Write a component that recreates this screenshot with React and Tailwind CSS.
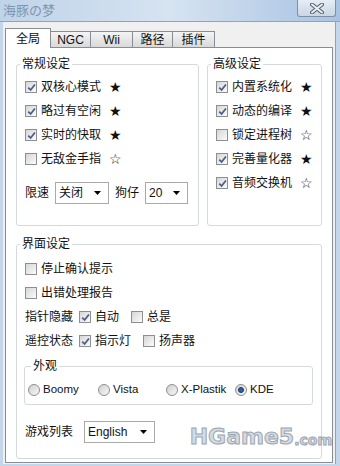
import React from "react";

// 复选框
const Check = ({ on }) => (
  <span className="w-[12px] h-[12px] shrink-0 border border-[#8e8f8f] bg-gradient-to-br from-[#d6d6d6] to-[#fbfbfb] flex items-center justify-center">
    {on && (
      <svg width="9" height="9" viewBox="0 0 10 10">
        <path d="M1.4 5.2 L4 7.8 L8.8 1.6" fill="none" stroke="#4a5d88" strokeWidth="1.9" />
      </svg>
    )}
  </span>
);

const Radio = ({ on }) => (
  <span className="w-[12px] h-[12px] shrink-0 rounded-full border border-[#8e8f8f] bg-gradient-to-br from-[#cfcfcf] to-[#f8f8f8] flex items-center justify-center">
    {on && <span className="w-[6px] h-[6px] rounded-full bg-[#2a5f9e] border border-[#173c6b]" />}
  </span>
);

const Arrow = () => (
  <svg width="7" height="4" viewBox="0 0 7 4">
    <path d="M0 0 H7 L3.5 4 Z" fill="#000" />
  </svg>
);

const Select = ({ value, w }) => (
  <div className={`h-[22px] ${w} border border-[#a9a9a9] bg-white flex items-center justify-between pl-[3px] pr-[7px]`}>
    <span className="text-[12px] leading-none">{value}</span>
    <Arrow />
  </div>
);

const CheckRow = ({ on, label, star }) => (
  <div className="h-[24px] flex items-center">
    <Check on={on} />
    <span className="ml-[4px] text-[12px] leading-none">{label}</span>
    {star !== undefined && (
      <span className="ml-[8px] text-[14px] leading-none font-['DejaVu_Sans',sans-serif]">{star ? "★" : "☆"}</span>
    )}
  </div>
);

const Legend = ({ children, cls = "-ml-[5px]" }) => (
  <legend className={`${cls} px-[2px] h-[16px] leading-[16px] text-[12px]`}>{children}</legend>
);

const tabs = [
  { label: "全局", w: "w-[46px]" },
  { label: "NGC", w: "w-[41px]" },
  { label: "Wii", w: "w-[43px]" },
  { label: "路径", w: "w-[41px]" },
  { label: "插件", w: "w-[43px]" },
];

export default function App() {
  return (
    <div className="w-[340px] h-[466px] flex flex-col bg-[#c3d6ea] text-[#111] font-['Liberation_Sans','Noto_Sans_CJK_SC',sans-serif] overflow-hidden">
      {/* 标题栏 */}
      <div className="h-[22px] shrink-0 flex items-start justify-between bg-gradient-to-r from-[#bfd3e9] via-[#d6e3f1] to-[#a8c3e2] border-b border-[#8fa3ba]">
        <span className="pl-[3px] pt-[4px] text-[13px] leading-none text-[#7e95ae]">海豚の梦</span>
        <div className="mr-[4px] w-[39px] h-[17px] rounded-b-[3px] border border-t-0 border-[#7d8fa6] bg-gradient-to-b from-[#e6edf5] to-[#c9d6e5] flex items-center justify-center">
          <svg width="14" height="11" viewBox="0 0 14 11">
            <path d="M2 1.5 L12 9.5 M12 1.5 L2 9.5" stroke="#59626d" strokeWidth="4" strokeLinecap="round" />
            <path d="M2 1.5 L12 9.5 M12 1.5 L2 9.5" stroke="#eceef1" strokeWidth="2" strokeLinecap="round" />
          </svg>
        </div>
      </div>

      {/* 客户区 */}
      <div className="flex-1 flex flex-col mx-[3px] mr-[4px] mb-[2px] bg-[#f0f0f0] border-r border-[#8aa3c1] pt-[6px] pl-[2px] pr-[2px] pb-[1px]">
        <div className="h-[19px] shrink-0 flex items-end">
          {tabs.map((t, i) =>
            i === 0 ? (
              <div key={t.label} className={`${t.w} h-[20px] -mb-px relative z-10 border border-b-0 border-[#898c95] bg-white flex items-start justify-center pt-[3px] text-[12px] leading-[14px]`}>
                {t.label}
              </div>
            ) : (
              <div key={t.label} className={`${t.w} h-[16px] -ml-px border border-b-0 border-[#8a8d95] bg-gradient-to-b from-[#f4f4f4] to-[#d9d9d9] flex items-center justify-center text-[12px] leading-none`}>
                {t.label}
              </div>
            )
          )}
        </div>

        {/* 面板 */}
        <div className="flex-1 relative border border-[#898c95] bg-white pt-[8px] px-[10px] flex flex-col">
          <div className="flex gap-[8px] items-stretch">
            <fieldset className="w-[183px] border border-[#d5d9dd] rounded-[3px] px-[8px] pt-[3px] pb-[21px]">
              <Legend>常规设定</Legend>
              <CheckRow on label="双核心模式" star />
              <CheckRow on label="略过有空闲" star />
              <CheckRow on label="实时的快取" star />
              <CheckRow label="无敌金手指" star={false} />
              <div className="mt-[11px] flex items-center">
                <span className="text-[12px] leading-none">限速</span>
                <div className="ml-[6px]">
                  <Select value="关闭" w="w-[54px]" />
                </div>
                <span className="ml-[6px] text-[12px] leading-none">狗仔</span>
                <div className="ml-[6px]">
                  <Select value="20" w="w-[43px]" />
                </div>
              </div>
            </fieldset>
            <fieldset className="w-[115px] border border-[#d5d9dd] rounded-[3px] px-[8px] pt-[3px]">
              <Legend>高级设定</Legend>
              <CheckRow on label="内置系统化" star />
              <CheckRow on label="动态的编译" star />
              <CheckRow label="锁定进程树" star={false} />
              <CheckRow on label="完善量化器" star />
              <CheckRow on label="音频交换机" star={false} />
            </fieldset>
          </div>

          <fieldset className="mt-[10px] border border-[#d5d9dd] rounded-[3px] px-[8px] pt-[5px] pb-[15px]">
            <Legend>界面设定</Legend>
            <CheckRow label="停止确认提示" />
            <CheckRow label="出错处理报告" />
            <div className="h-[24px] flex items-center text-[12px] leading-none">
              <span>指针隐藏</span>
              <span className="ml-[6px]"><Check on /></span>
              <span className="ml-[4px]">自动</span>
              <span className="ml-[12px]"><Check /></span>
              <span className="ml-[4px]">总是</span>
            </div>
            <div className="h-[24px] flex items-center text-[12px] leading-none">
              <span>遥控状态</span>
              <span className="ml-[6px]"><Check on /></span>
              <span className="ml-[4px]">指示灯</span>
              <span className="ml-[12px]"><Check /></span>
              <span className="ml-[4px]">扬声器</span>
            </div>

            <fieldset className="mt-[5px] w-[289px] -ml-px border border-[#d5d9dd] rounded-[3px] px-[3px] pt-[4px] pb-[2px]">
              <Legend cls="ml-[3px]">外观</Legend>
              <div className="h-[24px] flex items-center text-[11.5px] leading-none">
                <div className="w-[70px] flex items-center gap-[3px]"><Radio /><span>Boomy</span></div>
                <div className="w-[68px] flex items-center gap-[3px]"><Radio /><span>Vista</span></div>
                <div className="w-[69px] flex items-center gap-[3px]"><Radio /><span>X-Plastik</span></div>
                <div className="flex items-center gap-[3px]"><Radio on /><span>KDE</span></div>
              </div>
            </fieldset>

            <div className="mt-[16px] flex items-center">
              <span className="text-[12px] leading-none">游戏列表</span>
              <div className="ml-[11px]">
                <Select value="English" w="w-[71px]" />
              </div>
            </div>
          </fieldset>

          {/* 水印 */}
          <div className="absolute right-[0px] bottom-[14px] flex items-end font-['DejaVu_Sans',sans-serif] font-bold text-[#d5dae1] [-webkit-text-stroke:1px_#9ba5b2] leading-none">
            <span className="text-[22px]">HGame5</span>
            <span className="text-[14px] mb-[1px]">.com</span>
          </div>
        </div>
      </div>
    </div>
  );
}
